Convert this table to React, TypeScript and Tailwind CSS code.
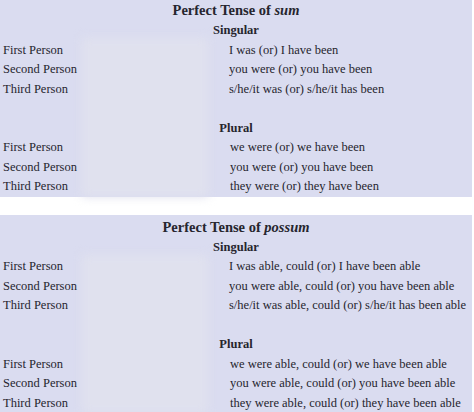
const tables = [
  {
    verb: "sum",
    singular: [
      "I was (or) I have been",
      "you were (or) you have been",
      "s/he/it was (or) s/he/it has been",
    ],
    plural: [
      "we were (or) we have been",
      "you were (or) you have been",
      "they were (or) they have been",
    ],
  },
  {
    verb: "possum",
    singular: [
      "I was able, could (or) I have been able",
      "you were able, could (or) you have been able",
      "s/he/it was able, could (or) s/he/it has been able",
    ],
    plural: [
      "we were able, could (or) we have been able",
      "you were able, could (or) you have been able",
      "they were able, could (or) they have been able",
    ],
  },
];

const persons = ["First Person", "Second Person", "Third Person"];

const Rows = ({ forms, indent }: { forms: string[]; indent: string }) => (
  <div className="grid grid-cols-[226px_1fr] pl-[3px]">
    {forms.map((form, i) => (
      <div key={i} className="contents">
        <div>{persons[i]}</div>
        <div className={indent}>{form}</div>
      </div>
    ))}
  </div>
);

const Table = ({ verb, singular, plural, first }: { verb: string; singular: string[]; plural: string[]; first?: boolean }) => (
  <section className={`relative w-[472px] bg-[#dadcf0] pt-[2px] ${first ? "-mt-[2px]" : ""}`}>
    <div className="pointer-events-none absolute left-[82px] top-[40px] bottom-0 w-[126px] bg-[#e0e1ee] blur-[5px]" />
    <div className="relative">
      <h2 className="text-center text-[14.5px] font-bold leading-[20px]">
        Perfect Tense of <em>{verb}</em>
      </h2>
      <div className="mt-[1px] text-[12.5px] leading-[19.5px]">
        <h3 className="text-center font-bold">Singular</h3>
        <Rows forms={singular} indent="" />
        <div className="h-[19.5px]" />
        <h3 className="text-center font-bold">Plural</h3>
        <Rows forms={plural} indent="pl-[1px]" />
      </div>
    </div>
  </section>
);

export default function App() {
  return (
    <div className="h-[412px] w-[474px] overflow-hidden bg-white font-['Liberation_Serif',serif] text-[#26252e]">
      <Table {...tables[0]} first />
      <div className="h-[18px]" />
      <Table {...tables[1]} />
    </div>
  );
}
